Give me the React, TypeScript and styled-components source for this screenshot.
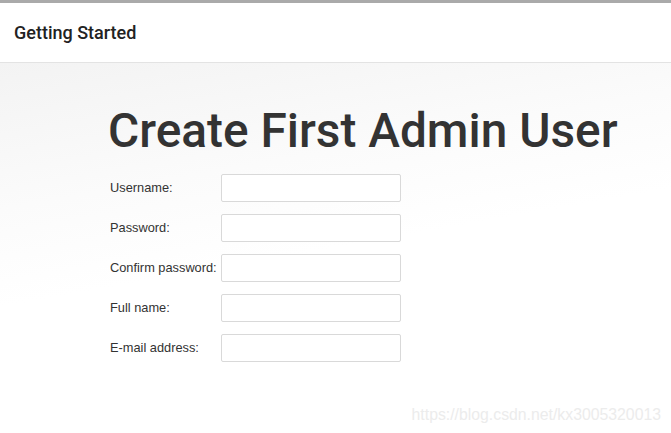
import styled, { createGlobalStyle } from "styled-components";

const GlobalStyle = createGlobalStyle`
  html, body {
    margin: 0;
    padding: 0;
    background: #fff;
  }
  #root {
    width: 671px;
    height: 433px;
    overflow: hidden;
  }
`;

const Page = styled.div`
  height: 433px;
  display: flex;
  flex-direction: column;
  border-top: 3px solid #aaaaaa;
  box-sizing: border-box;
  font-family: Roboto, "Liberation Sans", sans-serif;
`;

const Header = styled.header`
  height: 59px;
  flex-shrink: 0;
  background: #fff;
  border-bottom: 1px solid #e3e3e3;
  display: flex;
  align-items: center;
  padding-left: 14px;

  h2 {
    margin: 0;
    font-size: 18px;
    font-weight: 500;
    color: #222;
  }
`;

const Body = styled.main`
  flex: 1;
  display: flex;
  flex-direction: column;
  background: linear-gradient(170deg, #f3f3f3 0%, #fbfbfb 30%, #ffffff 50%);
  padding: 40px 0 0 108px;
`;

const Title = styled.h1`
  margin: 0 0 15px;
  font-size: 47.8px;
  font-weight: 500;
  line-height: 56px;
  color: #333;
`;

const Form = styled.div`
  display: grid;
  grid-template-columns: 111px 180px;
  row-gap: 12px;
  align-items: center;
  padding-left: 2px;
`;

const Label = styled.label`
  font-family: "Liberation Sans", Arial, sans-serif;
  font-size: 12.8px;
  color: #333;
  white-space: nowrap;
  margin-top: -2px;
`;

const Input = styled.input`
  box-sizing: border-box;
  height: 28px;
  width: 180px;
  border: 1px solid #d9d9d9;
  border-radius: 2px;
  background: #fff;
  outline: none;
`;

const Watermark = styled.div`
  margin-top: auto;
  align-self: flex-end;
  margin-right: 10px;
  margin-bottom: 9px;
  font-family: "Liberation Sans", Arial, sans-serif;
  font-size: 15.8px;
  color: #ececec;
`;

const fields = [
  "Username:",
  "Password:",
  "Confirm password:",
  "Full name:",
  "E-mail address:",
];

export default function App() {
  return (
    <>
      <GlobalStyle />
      <Page>
        <Header>
          <h2>Getting Started</h2>
        </Header>
        <Body>
          <Title>Create First Admin User</Title>
          <Form>
            {fields.map((f) => [
              <Label key={f + "l"}>{f}</Label>,
              <Input key={f + "i"} type="text" />,
            ])}
          </Form>
          <Watermark>https://blog.csdn.net/kx3005320013</Watermark>
        </Body>
      </Page>
    </>
  );
}
